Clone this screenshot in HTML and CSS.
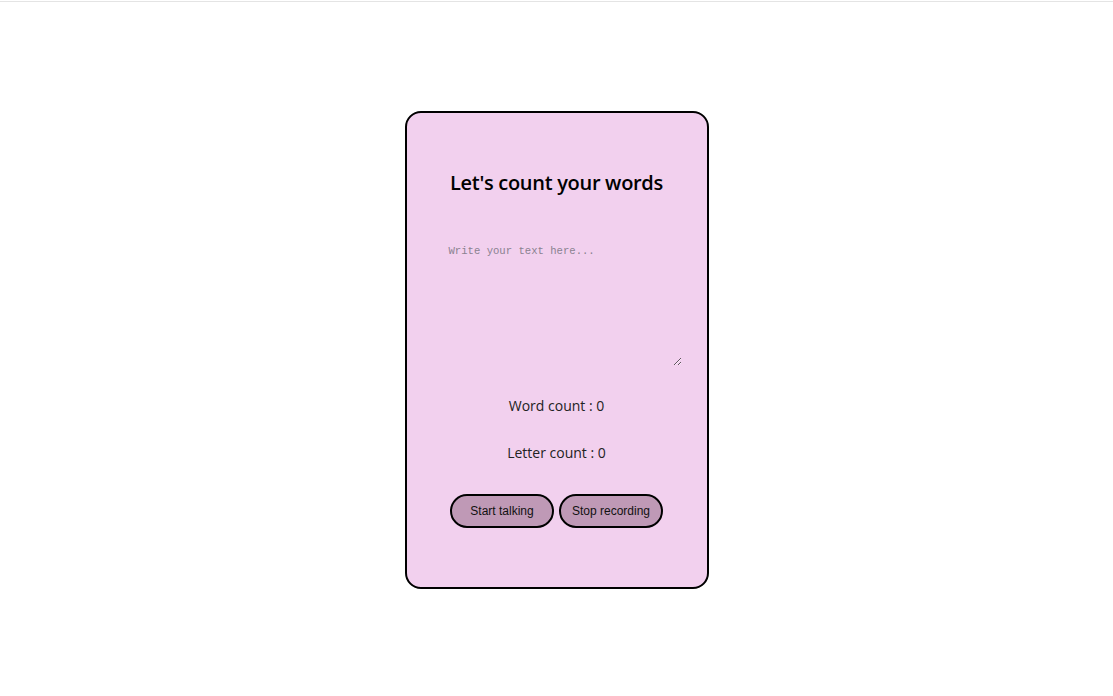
FILE: index.html
```html
<!DOCTYPE html>
<html lang="en">
<head>
<meta charset="utf-8">
<title>Word counter</title>
<link rel="stylesheet" href="styles.css">
</head>
<body>
<div class="topline"></div>
<main class="page">
  <section class="card">
    <h1 class="title">Let's count your words</h1>
    <textarea class="input" placeholder="Write your text here..."></textarea>
    <p class="count">Word count : 0</p>
    <p class="count">Letter count : 0</p>
    <div class="actions">
      <button class="btn">Start talking</button>
      <button class="btn">Stop recording</button>
    </div>
  </section>
</main>
</body>
</html>
```
FILE: styles.css
```css
html, body {
  margin: 0;
  padding: 0;
  background: #ffffff;
}
body {
  font-family: "Open Sans", "Liberation Sans", sans-serif;
  color: #111;
}
.topline {
  margin-top: 1px;
  height: 1px;
  background: #e4e4e4;
}
.page {
  display: flex;
  justify-content: center;
  padding-top: 109px;
}
.card {
  box-sizing: border-box;
  width: 304px;
  height: 478px;
  background: #f2d0ee;
  border: 2px solid #000;
  border-radius: 16px;
  display: flex;
  flex-direction: column;
  align-items: center;
  padding-top: 56px;
}
.title {
  margin: 0;
  font-size: 20px;
  font-weight: 600;
  line-height: 28px;
  color: #000;
  letter-spacing: -0.3px;
}
.input {
  margin-top: 45px;
  margin-left: 14px;
  width: 236px;
  height: 124px;
  box-sizing: border-box;
  border: none;
  background: transparent;
  padding: 3px 3px;
  font-family: "Liberation Mono", monospace;
  font-size: 10.6px;
  outline: none;
}
.input::placeholder {
  color: #8a8290;
}
.count {
  margin: 0;
  font-size: 14px;
  line-height: 20px;
  color: #222;
}
.count:first-of-type {
  margin-top: 30px;
}
.count + .count {
  margin-top: 27px;
}
.actions {
  margin-top: 31px;
  display: flex;
  gap: 5px;
}
.btn {
  box-sizing: border-box;
  width: 104px;
  height: 34px;
  border: 2px solid #000;
  border-radius: 17px;
  background: #bf99b6;
  font-family: "Liberation Sans", Arial, sans-serif;
  font-size: 12px;
  color: #111;
  padding: 0;
}
```
